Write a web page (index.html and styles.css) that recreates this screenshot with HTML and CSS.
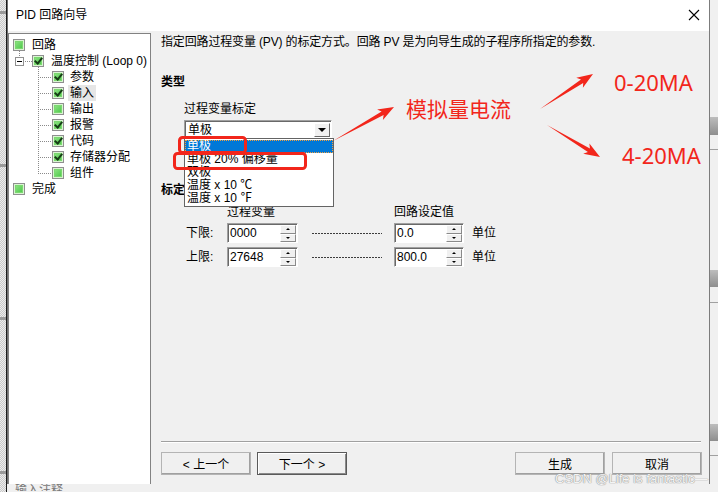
FILE: index.html
```html
<!DOCTYPE html>
<html lang="zh-CN">
<head>
    <meta charset="UTF-8">
    <title>PID 回路向导</title>
    <link rel="stylesheet" href="styles.css">
</head>
<body>
    <div class="screen">
        <div class="desk-left"></div>

        <div class="middle">
            <div class="dialog">
                <div class="titlebar">
                    <span class="title">PID 回路向导</span>
                    <svg class="close" width="12" height="12" viewBox="0 0 12 12">
                        <path d="M1 1 L11 11 M11 1 L1 11" stroke="#000" stroke-width="1.1" fill="none"/>
                    </svg>
                </div>

                <div class="dlg-body">
                    <!-- wizard steps -->
                    <ul class="tree">
                        <li class="row row-top"><span class="chk"></span><span class="lbl">回路</span></li>
                        <li class="row row-loop">
                            <span class="expander"></span><span class="hline"></span>
                            <span class="chk on"></span><span class="lbl">温度控制 (Loop 0)</span>
                        </li>
                        <li class="row row-child"><span class="elbow"></span><span class="chk on"></span><span class="lbl">参数</span></li>
                        <li class="row row-child"><span class="elbow"></span><span class="chk on"></span><span class="lbl hl">输入</span></li>
                        <li class="row row-child"><span class="elbow"></span><span class="chk"></span><span class="lbl">输出</span></li>
                        <li class="row row-child"><span class="elbow"></span><span class="chk on"></span><span class="lbl">报警</span></li>
                        <li class="row row-child"><span class="elbow"></span><span class="chk on"></span><span class="lbl">代码</span></li>
                        <li class="row row-child"><span class="elbow"></span><span class="chk on"></span><span class="lbl">存储器分配</span></li>
                        <li class="row row-child"><span class="elbow last"></span><span class="chk"></span><span class="lbl">组件</span></li>
                        <li class="row row-top"><span class="chk"></span><span class="lbl">完成</span></li>
                    </ul>

                    <div class="pane">
                        <p class="desc">指定回路过程变量 (PV) 的标定方式。回路 PV 是为向导生成的子程序所指定的参数.</p>

                        <h3 class="group-title">类型</h3>
                        <div class="field">
                            <div class="field-label">过程变量标定</div>
                            <div class="combo-wrap">
                                <div class="combo">
                                    <span class="combo-text">单极</span>
                                    <span class="combo-btn"></span>
                                </div>
                                <ul class="combo-list">
                                    <li class="sel">单极</li>
                                    <li>单极 20% 偏移量</li>
                                    <li>双极</li>
                                    <li>温度 x 10 ℃</li>
                                    <li>温度 x 10 ℉</li>
                                </ul>
                            </div>
                        </div>

                        <h3 class="group-title scale-title">标定</h3>
                        <div class="scale-grid">
                            <span></span>
                            <span class="col-head">过程变量</span>
                            <span></span>
                            <span class="col-head">回路设定值</span>
                            <span></span>

                            <span class="lim">下限:</span>
                            <div class="spin"><span class="spin-val">0000</span><span class="spin-btns"><i class="up"></i><i class="down"></i></span></div>
                            <span class="dash"></span>
                            <div class="spin"><span class="spin-val">0.0</span><span class="spin-btns"><i class="up"></i><i class="down"></i></span></div>
                            <span class="unit">单位</span>

                            <span class="lim">上限:</span>
                            <div class="spin"><span class="spin-val">27648</span><span class="spin-btns"><i class="up"></i><i class="down"></i></span></div>
                            <span class="dash"></span>
                            <div class="spin"><span class="spin-val">800.0</span><span class="spin-btns"><i class="up"></i><i class="down"></i></span></div>
                            <span class="unit">单位</span>
                        </div>

                        <div class="footer">
                            <div class="sep"></div>
                            <div class="buttons">
                                <button class="btn">&lt; 上一个</button>
                                <button class="btn default">下一个 &gt;</button>
                                <span class="spacer"></span>
                                <button class="btn">生成</button>
                                <button class="btn">取消</button>
                            </div>
                        </div>
                    </div>
                </div>
            </div>
            <div class="below">输入注释</div>
        </div>

        <div class="desk-right"></div>

        <!-- red notes drawn over the screenshot -->
        <svg class="marks" width="718" height="492" viewBox="0 0 718 492">
            <rect x="179.5" y="137.5" width="66" height="15" rx="3" fill="none" stroke="#f2261b" stroke-width="3"/>
            <rect x="174.5" y="153.5" width="131" height="15" rx="3" fill="none" stroke="#f2261b" stroke-width="3"/>
            <polygon fill="#f2261b" points="333,141 383.6,115 382.9,120 394,107 377.1,109.6 381.6,111.6"/>
            <polygon fill="#f2261b" points="540,109 583.2,82.9 582.9,87.8 593,74 576.3,77.8 581,79.5"/>
            <polygon fill="#f2261b" points="547,125 587.9,152 583.2,153.8 600,157 589.4,143.6 589.9,148.6"/>
        </svg>
        <span class="note note-main">模拟量电流</span>
        <span class="note note-ma note-a">0-20MA</span>
        <span class="note note-ma note-b">4-20MA</span>
        <span class="watermark">CSDN @Life is fantastic—</span>
    </div>
</body>
</html>
```

FILE: styles.css
```css
* {
    margin: 0;
    padding: 0;
    box-sizing: border-box;
}
body {
    font-family: "Liberation Sans", "Noto Sans CJK SC", sans-serif;
    font-size: 12px;
    color: #000;
    background: #f0f0f0;
}
ul {
    list-style: none;
}
.screen {
    position: relative;
    width: 718px;
    height: 492px;
    display: grid;
    grid-template-columns: 7px 703px 8px;
    overflow: hidden;
}

/* desktop around the dialog */
.desk-left {
    border-right: 1px solid #1b1b1b;
    background:
        linear-gradient(#9a9a9a, #9a9a9a) 0 11px / 6px 3px no-repeat,
        linear-gradient(#9a9a9a, #9a9a9a) 0 164px / 6px 3px no-repeat,
        linear-gradient(#9a9a9a, #9a9a9a) 0 317px / 6px 3px no-repeat,
        linear-gradient(#9a9a9a, #9a9a9a) 0 471px / 6px 3px no-repeat,
        repeating-conic-gradient(#c9c9c9 0 25%, #ececec 0 50%) 0 0 / 2px 2px;
}
.desk-right {
    background:
        linear-gradient(#bdbdbd, #8e8e8e) 0 117px / 100% 18px no-repeat,
        linear-gradient(#bdbdbd, #8e8e8e) 0 270px / 100% 17px no-repeat,
        linear-gradient(#bdbdbd, #8e8e8e) 0 424px / 100% 17px no-repeat,
        linear-gradient(#a0a0a0, #a0a0a0) 0 149px / 100% 1px no-repeat,
        linear-gradient(#a0a0a0, #a0a0a0) 0 302px / 100% 1px no-repeat,
        linear-gradient(#a0a0a0, #a0a0a0) 0 455px / 100% 1px no-repeat,
        #f0f0f0;
}
.middle {
    display: flex;
    flex-direction: column;
}
.below {
    height: 7px;
    overflow: hidden;
    padding-left: 8px;
    color: #777;
    line-height: 12px;
    margin-top: -1px;
    background: #f0f0f0;
}

/* dialog window */
.dialog {
    height: 485px;
    display: flex;
    flex-direction: column;
    border-left: 1px solid #6e6e6e;
    border-right: 1px solid #7c7c7c;
    border-bottom: 1px solid #7c7c7c;
    background: #f0f0f0;
}
.titlebar {
    height: 31px;
    background: #fff;
    display: flex;
    align-items: center;
    justify-content: space-between;
    padding: 0 9px 1px 8px;
}
.title {
    font-size: 12px;
    line-height: 16px;
}
.dlg-body {
    flex: 1;
    display: flex;
    padding-top: 2px;
}

/* step tree */
.tree {
    width: 143px;
    flex: none;
    background: #fff;
    border: 1px solid #828282;
    border-bottom: none;
    padding-top: 3px;
}
.row {
    height: 16px;
    display: flex;
    align-items: center;
    white-space: nowrap;
    line-height: 16px;
}
.row-top {
    padding-left: 4px;
}
.row-top:first-child {
    background: repeating-linear-gradient(to bottom, #8a8a8a 0 1px, transparent 1px 2px) 10px 14px / 1px 2px no-repeat;
}
.row-loop {
    padding-left: 6px;
    background:
        repeating-linear-gradient(to bottom, #8a8a8a 0 1px, transparent 1px 2px) 10px 0 / 1px 4px no-repeat,
        repeating-linear-gradient(to bottom, #8a8a8a 0 1px, transparent 1px 2px) 29px 14px / 1px 2px no-repeat;
}
.row-child {
    padding-left: 29px;
}
.lbl {
    margin-left: 7px;
}
.row-child .lbl {
    margin-left: 6px;
}
.lbl.hl {
    background: #e6e6e6;
    margin-left: 4px;
    padding: 0 2px;
}
.chk {
    width: 12px;
    height: 12px;
    flex: none;
    display: flex;
    align-items: center;
    justify-content: center;
    border: 1px solid #8f8f8f;
    background: linear-gradient(135deg, #9be98e, #3fc23f);
    box-shadow: inset 0 0 0 1px #d9f5d2, inset 0 0 0 2px #7bd870;
}
.chk.on::after {
    content: "";
    width: 3px;
    height: 6px;
    margin-top: -2px;
    border: solid #163d16;
    border-width: 0 2px 2px 0;
    transform: rotate(40deg);
}
.expander {
    width: 9px;
    height: 9px;
    flex: none;
    border: 1px solid #919191;
    background: #fff;
    display: flex;
    align-items: center;
    justify-content: center;
}
.expander::after {
    content: "";
    width: 5px;
    height: 1px;
    background: #000;
}
.hline {
    width: 8px;
    height: 16px;
    flex: none;
    background: repeating-linear-gradient(to right, #8a8a8a 0 1px, transparent 1px 2px) 1px 8px / 100% 1px no-repeat;
}
.elbow {
    width: 14px;
    height: 16px;
    flex: none;
    background:
        repeating-linear-gradient(to bottom, #8a8a8a 0 1px, transparent 1px 2px) 0 0 / 1px 100% no-repeat,
        repeating-linear-gradient(to right, #8a8a8a 0 1px, transparent 1px 2px) 0 8px / 100% 1px no-repeat;
}
.elbow.last {
    background:
        repeating-linear-gradient(to bottom, #8a8a8a 0 1px, transparent 1px 2px) 0 0 / 1px 9px no-repeat,
        repeating-linear-gradient(to right, #8a8a8a 0 1px, transparent 1px 2px) 0 8px / 100% 1px no-repeat;
}

/* right pane */
.pane {
    flex: 1;
    min-width: 0;
    margin-left: 10px;
    padding: 1px 7px 9px 0;
    display: flex;
    flex-direction: column;
}
.desc {
    line-height: 16px;
    white-space: nowrap;
    letter-spacing: -0.15px;
}
.group-title {
    font-size: 12px;
    font-weight: bold;
    line-height: 16px;
    margin-top: 24px;
}
.scale-title {
    margin-top: 44px;
}
.field {
    margin-left: 23px;
}
.field-label {
    line-height: 16px;
    margin-top: 11px;
}
.combo-wrap {
    position: relative;
    width: 148px;
    margin-top: 3px;
}
.combo {
    height: 18px;
    display: flex;
    align-items: center;
    justify-content: space-between;
    background: #fff;
    border: 1px solid;
    border-color: #a0a0a0 #fff #fff #a0a0a0;
    box-shadow: inset 1px 1px 0 #696969;
    padding: 1px 1px 0 3px;
}
.combo-text {
    line-height: 14px;
}
.combo-btn {
    width: 16px;
    height: 14px;
    background: #f0f0f0;
    border: 1px solid;
    border-color: #fff #696969 #696969 #fff;
    display: flex;
    align-items: center;
    justify-content: center;
}
.combo-btn::after {
    content: "";
    border-left: 4px solid transparent;
    border-right: 4px solid transparent;
    border-top: 4px solid #000;
}
.combo-list {
    position: absolute;
    left: 0;
    top: 18px;
    width: 150px;
    background: #fff;
    border: 1px solid #646464;
    padding: 1px 0;
    z-index: 2;
}
.combo-list li {
    height: 13px;
    line-height: 13px;
    padding-left: 2px;
    white-space: nowrap;
}
.combo-list li.sel {
    background: #0078d7;
    color: #fff;
    outline: 1px dotted #f0a040;
    outline-offset: -1px;
}

/* scaling table */
.scale-grid {
    display: grid;
    grid-template-columns: 41px 71px 96px 70px auto;
    grid-template-rows: 15px 20px 20px;
    row-gap: 4px;
    margin: 6px 0 0 25px;
    align-items: center;
    line-height: 16px;
}
.col-head {
    align-self: start;
    white-space: nowrap;
}
.lim {
    white-space: nowrap;
}
.spin {
    height: 20px;
    display: flex;
    background: #fff;
    border: 1px solid;
    border-color: #a0a0a0 #fff #fff #a0a0a0;
    box-shadow: inset 1px 1px 0 #696969;
    padding: 1px 1px 0 2px;
}
.spin-val {
    flex: 1;
    line-height: 17px;
}
.spin-btns {
    width: 16px;
    display: flex;
    flex-direction: column;
}
.spin-btns i {
    flex: 1;
    background: #f0f0f0;
    border: 1px solid;
    border-color: #fff #8a8a8a #8a8a8a #fff;
    display: flex;
    align-items: center;
    justify-content: center;
}
.spin-btns .up::after {
    content: "";
    border-left: 2px solid transparent;
    border-right: 2px solid transparent;
    border-bottom: 2px solid #000;
}
.spin-btns .down::after {
    content: "";
    border-left: 2px solid transparent;
    border-right: 2px solid transparent;
    border-top: 2px solid #000;
}
.dash {
    height: 1px;
    margin: 0 12px 0 14px;
    background: repeating-linear-gradient(to right, #3c3c3c 0 2px, transparent 2px 3px);
}
.unit {
    margin-left: 8px;
    white-space: nowrap;
}

/* bottom buttons */
.footer {
    margin-top: auto;
}
.sep {
    height: 2px;
    border-top: 1px solid #a0a0a0;
    border-bottom: 1px solid #fff;
    margin-bottom: 9px;
    margin-right: 1px;
}
.buttons {
    display: flex;
    gap: 6px;
}
.spacer {
    flex: 1;
}
.btn {
    width: 90px;
    height: 23px;
    font-family: inherit;
    font-size: 12px;
    background: #f0f0f0;
    border: 1px solid;
    border-color: #fff #696969 #696969 #fff;
    box-shadow: inset -1px -1px 0 #a0a0a0;
    outline: 1px solid #b4b4b4;
    outline-offset: -1px;
}
.btn:last-child {
    margin-left: 1px;
}
.btn.default {
    border-color: #5a5a5a;
    box-shadow: inset 1px 1px 0 #fff, inset -1px -1px 0 #8a8a8a;
    outline: none;
}

/* annotations */
.marks {
    position: absolute;
    left: 0;
    top: 0;
    pointer-events: none;
    z-index: 3;
}
.note {
    position: absolute;
    color: #f2261b;
    white-space: nowrap;
    z-index: 3;
}
.note-main {
    left: 406px;
    top: 94px;
    font-family: "Noto Sans CJK SC", sans-serif;
    font-size: 21px;
    line-height: 28px;
}
.note-ma {
    font-family: "Noto Sans", sans-serif;
    font-size: 22px;
    line-height: 28px;
}
.note-a {
    left: 614px;
    top: 68px;
}
.note-b {
    left: 622px;
    top: 141px;
}
.watermark {
    position: absolute;
    left: 555px;
    top: 471px;
    font-size: 13px;
    line-height: 16px;
    color: #f4f4f4;
    text-shadow: 0 0 1px #8a8a8a, 0 0 1px #8a8a8a;
    z-index: 3;
    white-space: nowrap;
}
```
